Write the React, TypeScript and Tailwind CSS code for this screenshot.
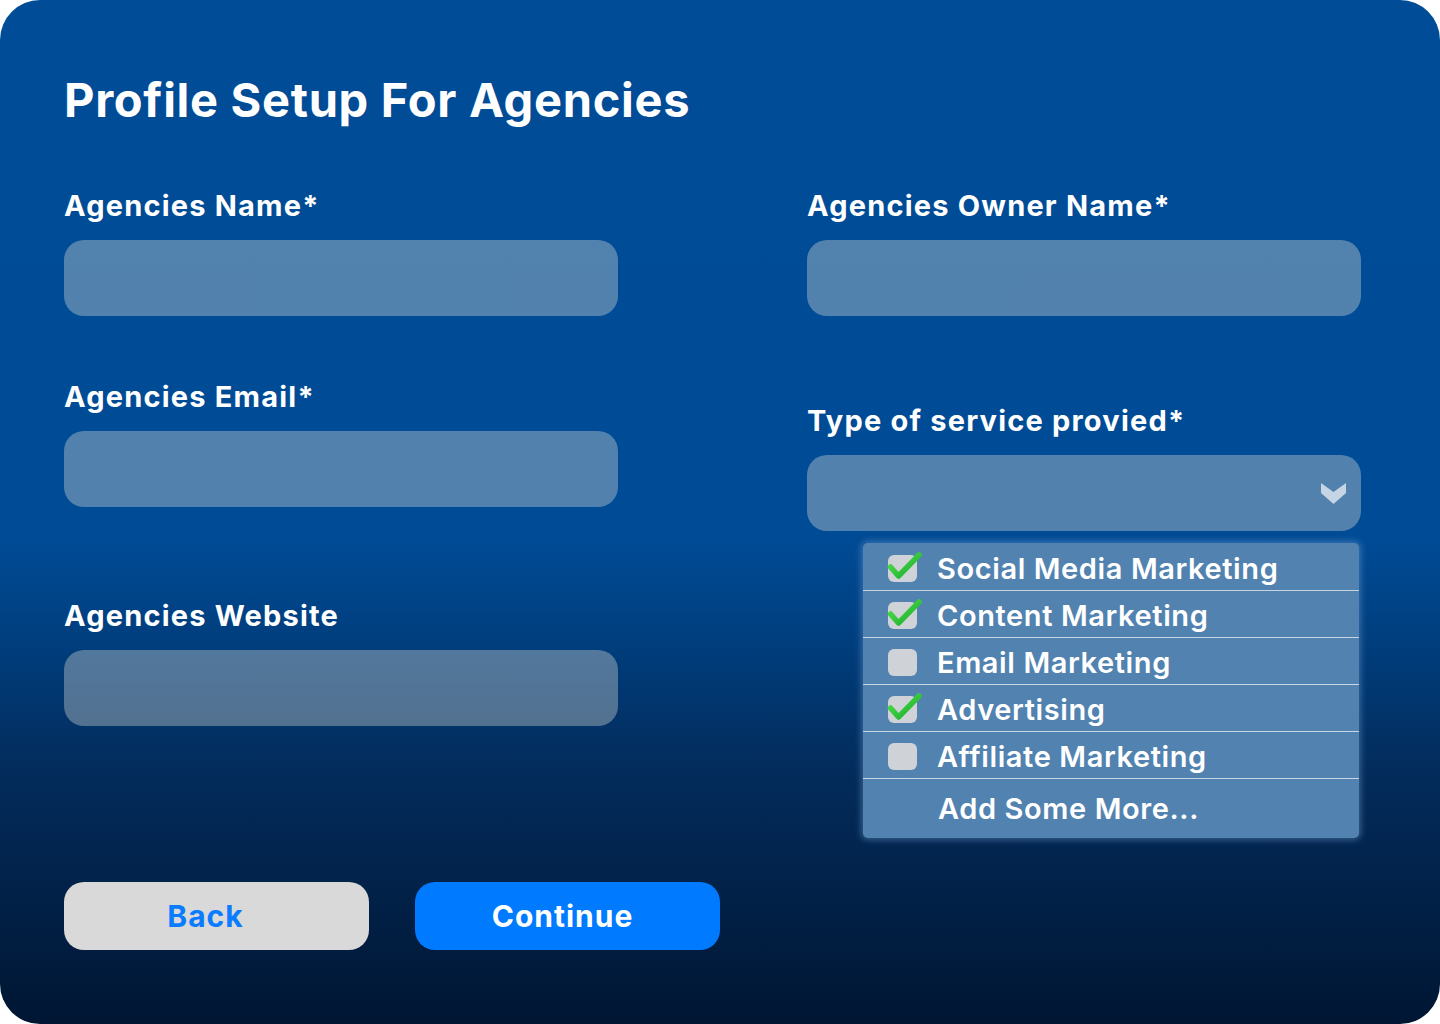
import type { ReactNode } from "react";

const services = [
  { name: "Social Media Marketing", checked: true },
  { name: "Content Marketing", checked: true },
  { name: "Email Marketing", checked: false },
  { name: "Advertising", checked: true },
  { name: "Affiliate Marketing", checked: false },
];

function Label({ children, className = "" }: { children: ReactNode; className?: string }) {
  return (
    <p className={`text-[29px] font-bold leading-[36px] tracking-[1.2px] text-white ${className}`}>{children}</p>
  );
}

function Field() {
  return <div className="h-[76px] w-full rounded-[20px] bg-[#ece8dc]/35" />;
}

function Checkbox({ checked }: { checked: boolean }) {
  return (
    <span className="relative block h-[27px] w-[29px] shrink-0 rounded-[6px] bg-[#cfd3d8]">
      {checked && (
        <svg className="absolute -left-[1px] -top-[4px]" width="38" height="30" viewBox="0 0 38 30" fill="none">
          <defs>
            <linearGradient id="chk" x1="0" y1="0" x2="1" y2="1">
              <stop offset="0" stopColor="#52e24c" />
              <stop offset="1" stopColor="#18aa2c" />
            </linearGradient>
          </defs>
          <path d="M3.5 16 L11.5 25 L32 4" stroke="url(#chk)" strokeWidth="5.5" strokeLinecap="round" strokeLinejoin="round" />
        </svg>
      )}
    </span>
  );
}

export default function App() {
  return (
    <div className="h-[1024px] w-[1440px] bg-white font-['Inter',sans-serif]">
      <div className="flex h-full flex-col rounded-[40px] bg-[linear-gradient(180deg,#004c97_0%,#004b95_53%,#003c7a_64%,#032c5c_75%,#001633_100%)] px-16 pt-[72px]">
        <h1 className="text-[47px] font-bold leading-[56px] tracking-[0.7px] text-white">Profile Setup For Agencies</h1>

        <div className="mt-[60px] grid grid-cols-[554px_554px] gap-x-[189px]">
          <div className="flex flex-col">
            <Label>Agencies Name*</Label>
            <div className="mt-4">
              <Field />
            </div>
            <Label className="mt-[63px]">Agencies Email*</Label>
            <div className="mt-4">
              <Field />
            </div>
            <Label className="mt-[91px]">Agencies Website</Label>
            <div className="mt-4">
              <Field />
            </div>
          </div>

          <div className="flex flex-col">
            <Label>Agencies Owner Name*</Label>
            <div className="mt-4">
              <Field />
            </div>
            <Label className="mt-[87px]">Type of service provied*</Label>
            <div className="relative mt-4">
              <Field />
              <svg className="absolute right-[15px] top-[28px]" width="25" height="21" viewBox="0 0 25 21">
                <polygon points="0,0 12.5,9 25,0 25,10 12.5,21 0,10" fill="#c5d5e6" />
              </svg>
            </div>

            <div className="ml-14 mr-[2px] mt-3 rounded-[5px] bg-[#5283b0] shadow-[0_0_6px_2px_rgba(120,165,215,0.45)]">
              {services.map((s, i) => (
                <div
                  key={s.name}
                  className={`flex ${i === 0 ? "h-[48px]" : "h-[47px]"} items-center gap-5 border-b-[1.5px] border-[#c6d4e3] pl-[25px] pt-[3px]`}
                >
                  <Checkbox checked={s.checked} />
                  <span className="text-[29px] font-semibold leading-none tracking-[0.6px] text-white">{s.name}</span>
                </div>
              ))}
              <div className="flex h-[59px] items-center pl-[75px]">
                <span className="text-[29px] font-semibold leading-none tracking-[0.6px] text-white">Add Some More...</span>
              </div>
            </div>
          </div>
        </div>

        <div className="mt-[44px] flex gap-[46px]">
          <button className="h-[68px] w-[305px] rounded-[20px] bg-[#d9d9d9] pr-[22px] text-[30px] font-bold tracking-[1px] text-[#0a7cff]">
            Back
          </button>
          <button className="h-[68px] w-[305px] rounded-[20px] bg-[#007bff] pr-[10px] text-[30px] font-bold tracking-[1px] text-white">
            Continue
          </button>
        </div>
      </div>
    </div>
  );
}
